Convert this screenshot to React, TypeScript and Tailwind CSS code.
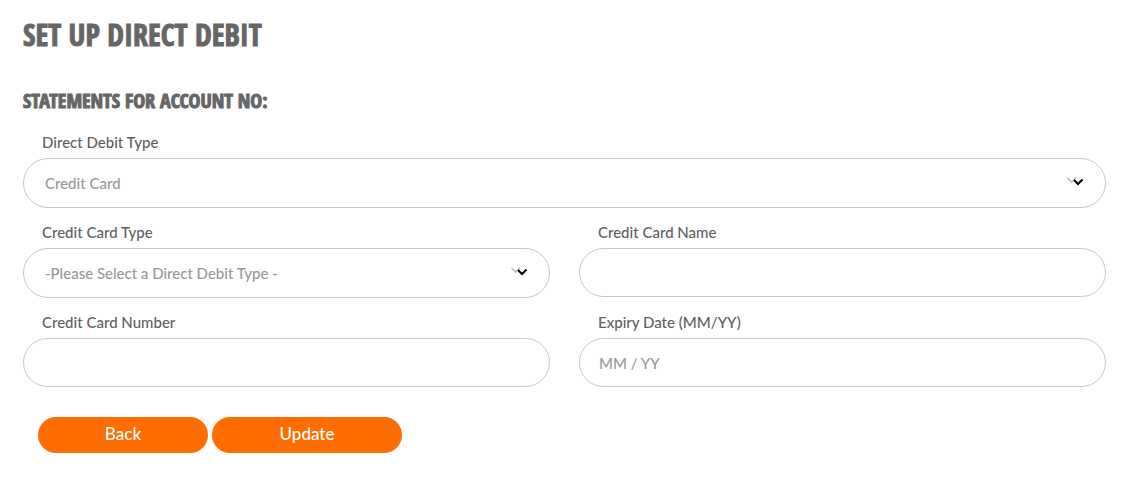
import { useState } from "react"
import type { InputHTMLAttributes, SelectHTMLAttributes } from "react"
import { clsx } from "clsx"

const headingStyles =
  "font-['Open_Sans_Condensed','Roboto_Condensed','Liberation_Sans_Narrow',sans-serif] font-extrabold text-[#666] uppercase [-webkit-text-stroke:1px_#666]"

const debitTypes = ["Credit Card", "Bank Account"]

const cardTypes = ["-Please Select a Direct Debit Type -", "Visa", "Mastercard"]

interface LabelProps {
  htmlFor: string
  text: string
}

function FieldLabel({ htmlFor, text }: LabelProps) {
  return (
    <label htmlFor={htmlFor} className="pl-[19px] text-[15px] leading-[18px] font-medium text-[#5f5f5f]">
      {text}
    </label>
  )
}

interface SelectFieldProps extends SelectHTMLAttributes<HTMLSelectElement> {
  id: string
  label: string
  options: string[]
}

function SelectField({ id, label, options, className, ...props }: SelectFieldProps) {
  return (
    <div className={clsx("flex flex-col gap-[7px]", className)}>
      <FieldLabel htmlFor={id} text={label} />
      <div className="relative">
        <select
          id={id}
          className="h-[50px] w-full appearance-none rounded-full border border-[#c8c8c8] bg-white pr-12 pl-[21px] text-[15px] font-medium text-[#999]"
          {...props}
        >
          {options.map((option) => (
            <option key={option}>{option}</option>
          ))}
        </select>
        <svg
          viewBox="0 0 18 12"
          className="pointer-events-none absolute top-[18px] right-[22px] h-3 w-[18px]"
          fill="none"
          aria-hidden="true"
        >
          <path d="M1.5 2 5.5 6 10 1.5" stroke="#bdbdbd" strokeWidth="1.6" />
          <path d="M8 4 12 8 16.5 3.5" stroke="#000" strokeWidth="2" />
        </svg>
      </div>
    </div>
  )
}

interface TextFieldProps extends InputHTMLAttributes<HTMLInputElement> {
  id: string
  label: string
}

function TextField({ id, label, ...props }: TextFieldProps) {
  return (
    <div className="flex flex-col gap-[7px]">
      <FieldLabel htmlFor={id} text={label} />
      <input
        id={id}
        type="text"
        className="h-[49px] w-full rounded-full border border-[#c8c8c8] bg-white px-[19px] text-[15px] font-medium text-[#5f5f5f] placeholder:text-[#999]"
        {...props}
      />
    </div>
  )
}

export default function App() {
  const [debitType, setDebitType] = useState(debitTypes[0])
  const [cardType, setCardType] = useState(cardTypes[0])

  return (
    <main className="bg-white pt-[15px] pr-7 pb-6 pl-[23px] font-[Lato,sans-serif]">
      <h1 className={clsx(headingStyles, "text-[30px] leading-10")}>Set up direct debit</h1>
      <h2 className={clsx(headingStyles, "mt-8 text-xl leading-7")}>Statements for account no:</h2>

      <form className="mt-[18px]" onSubmit={(event) => event.preventDefault()}>
        <div className="grid grid-cols-2 gap-x-[29px] gap-y-[15px]">
          <SelectField
            id="debit-type"
            label="Direct Debit Type"
            options={debitTypes}
            value={debitType}
            onChange={(event) => setDebitType(event.target.value)}
            className="col-span-2"
          />
          <SelectField
            id="card-type"
            label="Credit Card Type"
            options={cardTypes}
            value={cardType}
            onChange={(event) => setCardType(event.target.value)}
          />
          <TextField id="card-name" label="Credit Card Name" />
          <TextField id="card-number" label="Credit Card Number" inputMode="numeric" />
          <TextField id="expiry-date" label="Expiry Date (MM/YY)" placeholder="MM / YY" />
        </div>

        <div className="mt-[30px] flex gap-1 pl-[15px]">
          <button type="button" className="h-9 w-[170px] rounded-full bg-[#ff6c00] pb-0.5 text-[17px] font-medium text-white">
            Back
          </button>
          <button type="submit" className="h-9 w-[190px] rounded-full bg-[#ff6c00] pb-0.5 text-[17px] font-medium text-white">
            Update
          </button>
        </div>
      </form>
    </main>
  )
}
